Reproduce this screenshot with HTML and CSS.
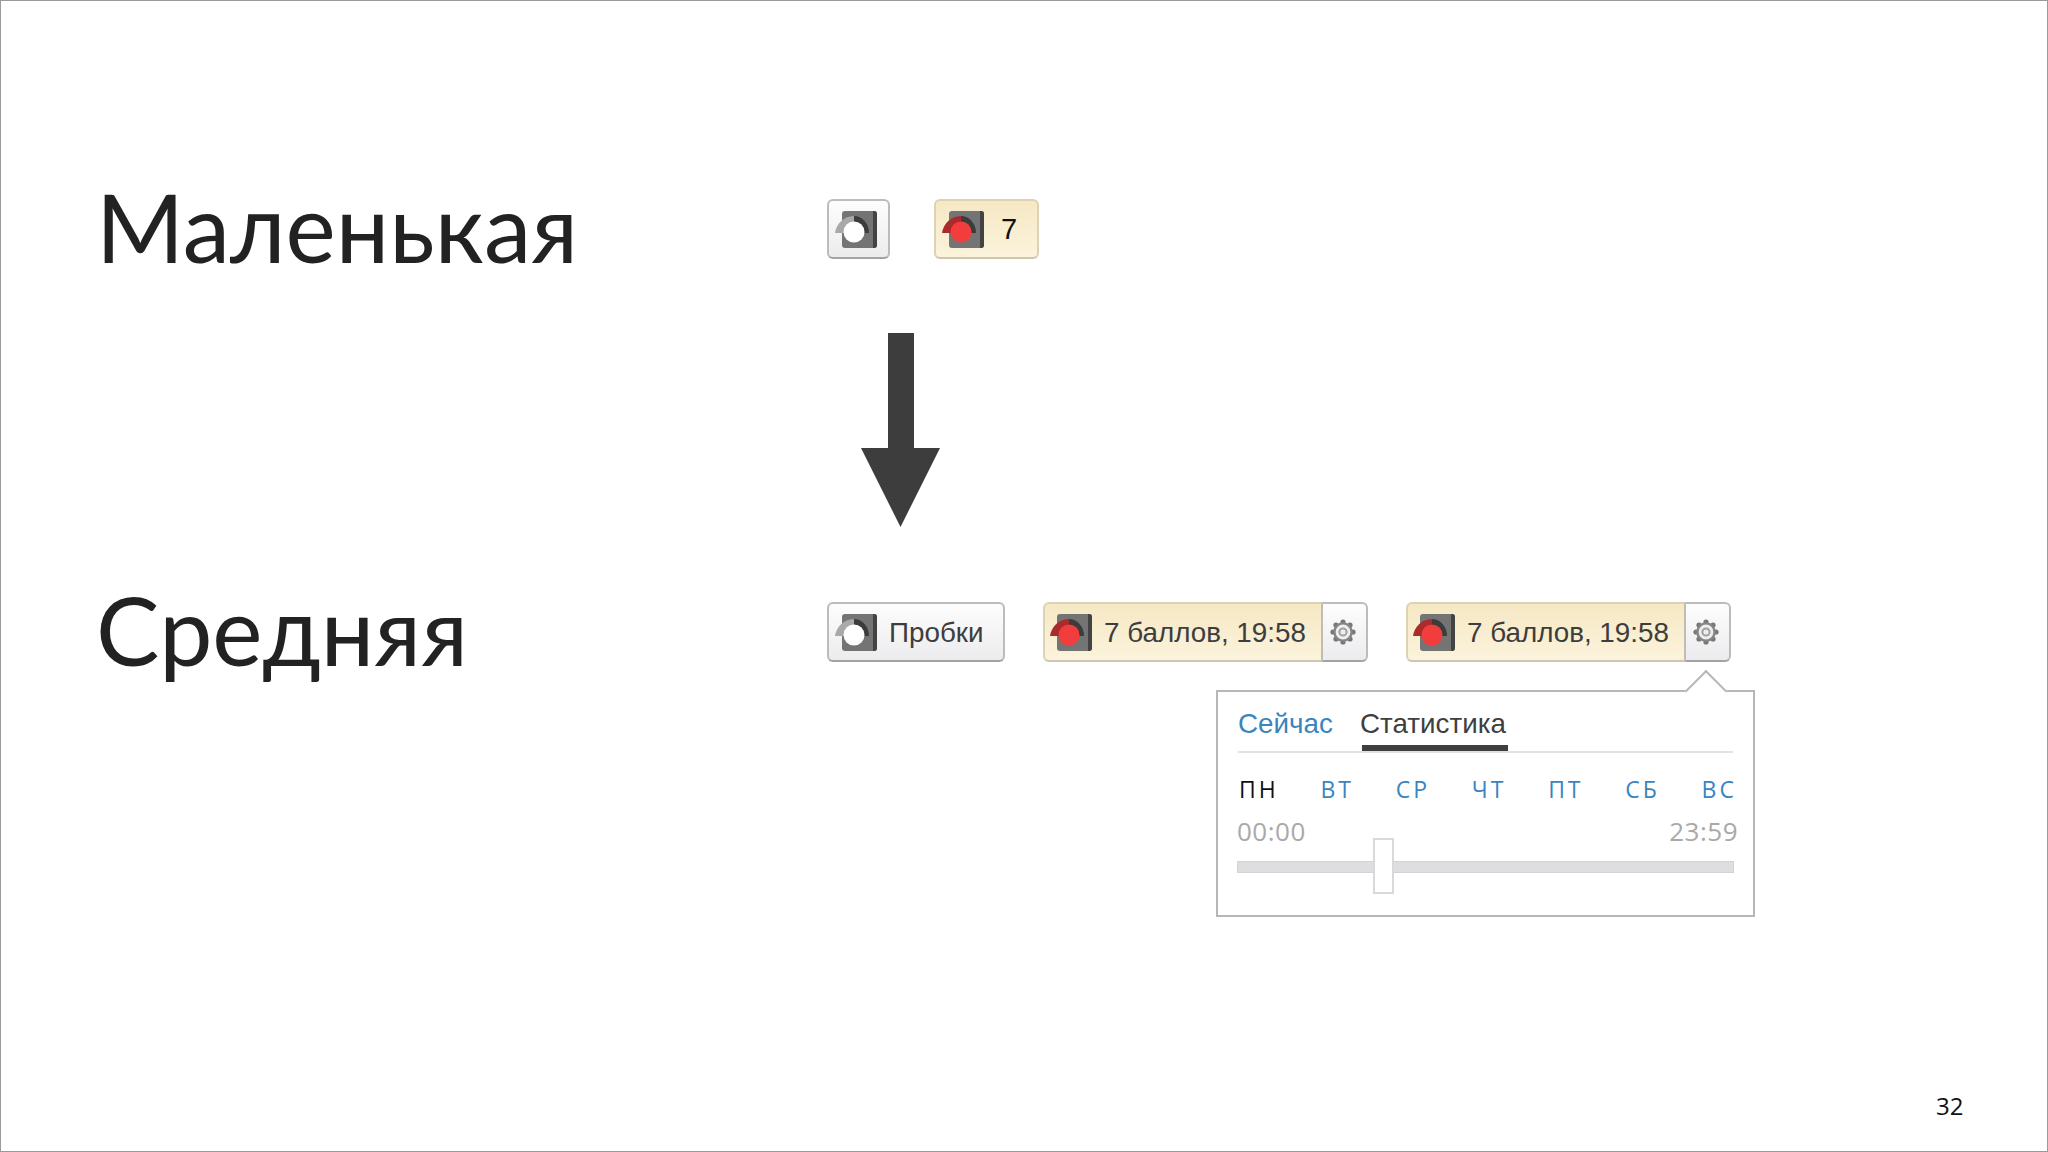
FILE: index.html
```html
<!DOCTYPE html>
<html lang="ru">
<head>
<meta charset="utf-8">
<title>Слайд 32</title>
<link rel="stylesheet" href="styles.css">
</head>
<body>
<svg class="defs" width="0" height="0" aria-hidden="true">
  <symbol id="ic-off" viewBox="0 0 42 37">
    <rect x="7" y="0" width="35" height="37" rx="3" fill="#747474"/>
    <path d="M38 0h1a3 3 0 0 1 3 3v31a3 3 0 0 1-3 3h-1z" fill="#434343"/>
    <path d="M0 22C1 14 8 5 19 5V22Z" fill="#a9a9a9"/>
    <path d="M19 5A15 17 0 0 1 34 22H19Z" fill="#3c3c3c"/>
    <circle cx="19" cy="21" r="10.500" fill="#fff"/>
  </symbol>
  <symbol id="ic-on" viewBox="0 0 42 37">
    <rect x="7" y="0" width="35" height="37" rx="3" fill="#747474"/>
    <path d="M38 0h1a3 3 0 0 1 3 3v31a3 3 0 0 1-3 3h-1z" fill="#434343"/>
    <path d="M0 22C1 14 8 5 19 5V22Z" fill="#ab2a2c"/>
    <path d="M19 5A15 17 0 0 1 34 22H19Z" fill="#3c3c3c"/>
    <circle cx="19" cy="21" r="10.500" fill="#f23d3c"/>
  </symbol>
  <symbol id="ic-gear" viewBox="0 0 26 26">
    <g fill="#777">
      <circle cx="13" cy="3" r="2.600"/><circle cx="20" cy="6" r="2.600"/>
      <circle cx="23" cy="13" r="2.600"/><circle cx="20" cy="20" r="2.600"/>
      <circle cx="13" cy="23" r="2.600"/><circle cx="6" cy="20" r="2.600"/>
      <circle cx="3" cy="13" r="2.600"/><circle cx="6" cy="6" r="2.600"/>
    </g>
    <circle cx="13" cy="13" r="8.600" fill="#eee" stroke="#858585" stroke-width="2.400"/>
    <circle cx="13" cy="13" r="3.600" fill="none" stroke="#a0a0a0" stroke-width="2"/>
  </symbol>
</svg>
<main class="slide">
  <section class="row">
    <h1 class="title">Маленькая</h1>
    <div class="controls controls-small">
      <button class="btn btn-plain btn-square"><svg class="icon"><use href="#ic-off"/></svg></button>
      <button class="btn btn-warm btn-score"><svg class="icon"><use href="#ic-on"/></svg><span class="score">7</span></button>
    </div>
  </section>
  <svg class="arrow" viewBox="0 0 79 194" width="79" height="194" aria-hidden="true">
    <path d="M27 0H53V115H79L39.500 194L0 115H27Z" fill="#3d3d3d"/>
  </svg>
  <section class="row">
    <h1 class="title">Средняя</h1>
    <div class="controls controls-medium">
      <button class="btn btn-plain btn-wide"><svg class="icon"><use href="#ic-off"/></svg><span class="label">Пробки</span></button>
      <div class="combo">
        <button class="btn btn-warm btn-main"><svg class="icon"><use href="#ic-on"/></svg><span class="label">7 баллов, 19:58</span></button>
        <button class="btn btn-plain btn-gear"><svg class="gear"><use href="#ic-gear"/></svg></button>
      </div>
      <div class="combo combo-open">
        <button class="btn btn-warm btn-main"><svg class="icon"><use href="#ic-on"/></svg><span class="label">7 баллов, 19:58</span></button>
        <button class="btn btn-plain btn-gear"><svg class="gear"><use href="#ic-gear"/></svg></button>
        <div class="popover">
          <nav class="tabs">
            <a class="tab tab-link">Сейчас</a>
            <a class="tab tab-active">Статистика</a>
          </nav>
          <div class="days">
            <span class="day day-active">ПН</span>
            <span class="day">ВТ</span>
            <span class="day">СР</span>
            <span class="day">ЧТ</span>
            <span class="day">ПТ</span>
            <span class="day">СБ</span>
            <span class="day">ВС</span>
          </div>
          <div class="times"><span>00:00</span><span>23:59</span></div>
          <div class="track"><span class="thumb"></span></div>
        </div>
      </div>
    </div>
  </section>
  <footer class="page-num">32</footer>
</main>
</body>
</html>
```
FILE: styles.css
```css
* { box-sizing: border-box; }
html, body { margin: 0; padding: 0; background: #fff; }
.defs { position: absolute; }
.slide {
  width: 2048px;
  height: 1152px;
  border: 1px solid #9a9a9a;
  padding: 198px 0 0 97px;
  display: flex;
  flex-direction: column;
  background: #fff;
  overflow: hidden;
}
.row { display: flex; height: 60px; align-items: flex-start; }
.title {
  margin: -3px 0 0 -2px;
  width: 731px;
  flex: none;
  font: 400 95px/60px Lato, "Open Sans", sans-serif;
  color: #222;
  white-space: nowrap;
}
.controls { display: flex; }
.controls-small { gap: 44px; }
.controls-medium { gap: 38px; }
.arrow { display: block; margin: 74px 0 75px 763px; flex: none; }

.btn {
  display: flex;
  align-items: center;
  height: 60px;
  padding: 0;
  margin: 0;
  border: 2px solid #bcbcbc;
  border-bottom-color: #a3a3a3;
  border-radius: 6px;
  font: 400 27.800px/1 "Liberation Sans", sans-serif;
  color: #3d3d3d;
}
.btn-plain { background: linear-gradient(#fdfdfd, #ececee); }
.btn-warm {
  background: linear-gradient(#f6e8c4, #fbf3dc);
  border-color: #dbd3b4;
  border-bottom-color: #cdc7ad;
}
.icon { width: 42px; height: 37px; flex: none; filter: blur(0.500px); }
.gear { width: 26px; height: 26px; filter: blur(0.500px); }

.btn-square { width: 63px; padding-left: 6px; }
.btn-score { width: 105px; padding-left: 6px; }
.score { margin-left: 17px; color: #111; font-size: 29px; }
.btn-wide { width: 178px; padding-left: 6px; }
.label { margin: 2px 0 0 12px; white-space: nowrap; }

.combo { position: relative; display: flex; width: 325px; }
.btn-main { width: 278px; padding-left: 5px; border-radius: 6px 0 0 6px; border-right: 0; }
.btn-gear {
  width: 47px;
  padding-right: 4px;
  justify-content: center;
  border-left: 2px solid #c0beb4;
  border-radius: 0 6px 6px 0;
}

.popover {
  position: absolute;
  top: 88px;
  left: -190px;
  width: 539px;
  height: 227px;
  padding: 14px 20px 0 20px;
  background: #fff;
  border: 2px solid #b7b7b9;
}
.popover::before {
  content: "";
  position: absolute;
  top: -16px;
  left: 473px;
  width: 28px;
  height: 28px;
  background: #fff;
  border-top: 2px solid #b7b7b9;
  border-left: 2px solid #b7b7b9;
  transform: rotate(45deg);
}
.tabs {
  position: relative;
  display: flex;
  gap: 27px;
  height: 47px;
  border-bottom: 2px solid #e2e1e3;
  font: 400 27.800px/36px "Liberation Sans", sans-serif;
}
.tab-link { color: #3a85bd; }
.tab-active { position: relative; color: #3f3f3f; }
.tab-active::after {
  content: "";
  position: absolute;
  left: 2px;
  right: -2px;
  top: 39px;
  height: 6px;
  background: #3f3f3f;
}
.days {
  display: flex;
  justify-content: space-between;
  margin: 21px -4px 0 0;
  padding: 0 0 0 1px;
  font: 400 23px/30px "Open Sans", sans-serif;
  letter-spacing: 3px;
  color: #3a85bd;
}
.day-active { color: #111; }
.times {
  display: flex;
  justify-content: space-between;
  margin: 12px -5px 0 -1px;
  font: 400 26px/30px "Open Sans", sans-serif;
  letter-spacing: 0.500px;
  color: #a9a9a9;
}
.track {
  position: relative;
  height: 12px;
  margin: 15px -1px 0 -1px;
  background: #dedddf;
  border: 1px solid #d3d2d5;
}
.thumb {
  position: absolute;
  top: -24px;
  left: 135px;
  width: 21px;
  height: 56px;
  background: #fff;
  border: 2px solid #d9d8db;
}
.page-num {
  margin-top: auto;
  margin-bottom: 30px;
  margin-left: 1838px;
  font: 400 24px/30px "Open Sans", sans-serif;
  color: #111;
}
```
